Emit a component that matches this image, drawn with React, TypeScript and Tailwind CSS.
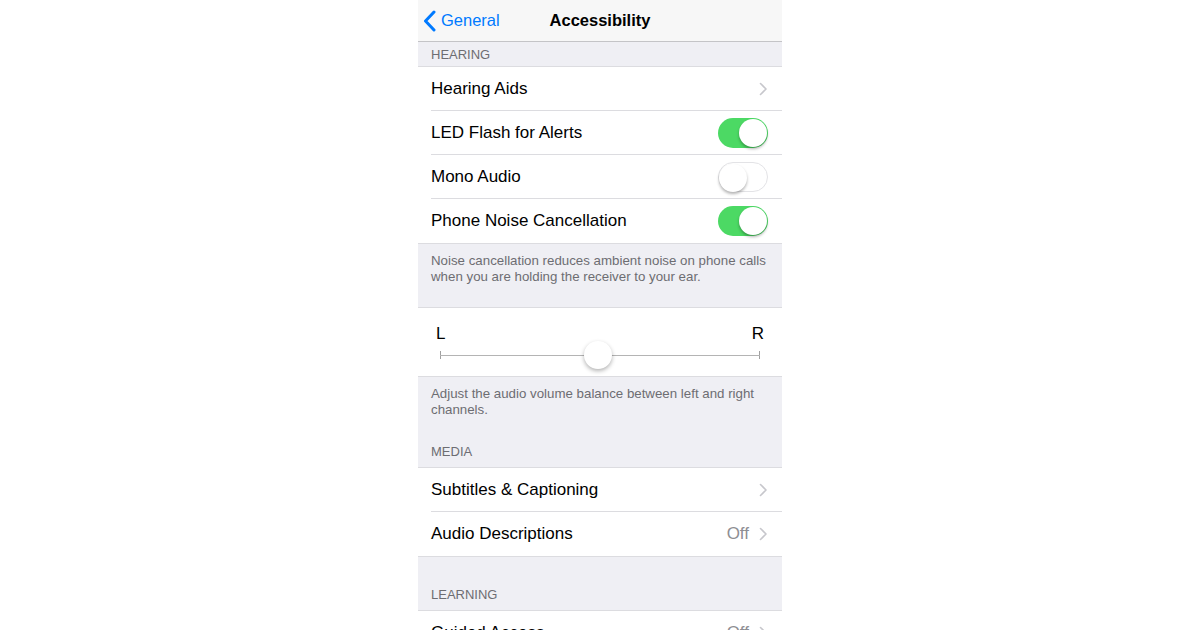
import React from 'react';

const font = { fontFamily: '"Liberation Sans", Arial, sans-serif' };

function Chevron() {
  return (
    <svg width="9" height="14" viewBox="0 0 9 14" className="shrink-0">
      <path d="M1.5 1.5 L7 7 L1.5 12.5" fill="none" stroke="#c7c7cc" strokeWidth="1.6" strokeLinecap="round" strokeLinejoin="round" />
    </svg>
  );
}

function Toggle({ on }: { on: boolean }) {
  return (
    <div
      className={`relative h-[30px] w-[50px] shrink-0 rounded-full ${
        on ? 'bg-[#4cd964]' : 'bg-white border border-[#e3e3e6]'
      }`}
    >
      <div
        className={`absolute top-[1px] h-[28px] w-[28px] rounded-full bg-white shadow-[0_2px_3px_rgba(0,0,0,0.3)] ${
          on ? 'right-[1px]' : 'left-0 top-0'
        }`}
      />
    </div>
  );
}

function Row({ label, last, children }: { label: string; last?: boolean; children?: React.ReactNode }) {
  return (
    <div className="flex h-[44px] items-center pl-[13px]">
      <div
        className={`flex h-full flex-1 items-center justify-between pr-[14px] ${
          last ? '' : 'border-b border-[#dcdce0]'
        }`}
      >
        <span className="text-[17px] text-black">{label}</span>
        <div className="flex items-center gap-[10px]">{children}</div>
      </div>
    </div>
  );
}

function Header({ children, className = '' }: { children: React.ReactNode; className?: string }) {
  return (
    <div className={`flex shrink-0 items-end px-[13px] text-[13px] text-[#6d6d72] ${className}`}>
      {children}
    </div>
  );
}

export default function App() {
  return (
    <div className="flex h-[630px] w-[1200px] justify-center overflow-hidden bg-white" style={font}>
      <div className="flex w-[364px] shrink-0 flex-col bg-[#efeff4]">
        {/* nav bar */}
        <div className="relative flex h-[42px] shrink-0 items-center border-b border-[#c4c4c7] bg-[#f7f7f7]">
          <div className="flex items-center pl-[5px] text-[#007aff]">
            <svg width="14" height="22" viewBox="0 0 14 22">
              <path d="M11 2 L2.5 11 L11 20" fill="none" stroke="#007aff" strokeWidth="3" strokeLinecap="round" strokeLinejoin="round" />
            </svg>
            <span className="ml-[4px] text-[16.5px]">General</span>
          </div>
          <span className="absolute left-0 right-0 text-center text-[16.5px] font-bold text-black">Accessibility</span>
        </div>

        <Header className="h-[24px] pb-[2px]">HEARING</Header>
        <div className="shrink-0 border-y border-[#dcdce0] bg-white">
          <Row label="Hearing Aids">
            <Chevron />
          </Row>
          <Row label="LED Flash for Alerts">
            <Toggle on />
          </Row>
          <Row label="Mono Audio">
            <Toggle on={false} />
          </Row>
          <Row label="Phone Noise Cancellation" last>
            <Toggle on />
          </Row>
        </div>
        <div className="h-[63px] shrink-0 px-[13px] pt-[9px] text-[13.3px] leading-[16px] text-[#6d6d72]">
          Noise cancellation reduces ambient noise on phone calls when you are holding the receiver to your ear.
        </div>

        {/* balance slider */}
        <div className="h-[70px] shrink-0 border-y border-[#dcdce0] bg-white px-[18px] pt-[16px]">
          <div className="flex justify-between text-[17px] leading-[20px] text-black">
            <span>L</span>
            <span>R</span>
          </div>
          <div className="relative mx-[4px] mt-[6px] h-[10px]">
            <div className="absolute left-0 top-[1px] h-[8px] w-px bg-[#a0a0a0]" />
            <div className="absolute right-0 top-[1px] h-[8px] w-px bg-[#a0a0a0]" />
            <div className="absolute left-0 right-0 top-[5px] h-px bg-[#b4b4b4]" />
            <div className="absolute left-[144px] top-[-9px] h-[28px] w-[28px] rounded-full bg-white shadow-[0_2px_4px_rgba(0,0,0,0.3)]" />
          </div>
        </div>
        <div className="shrink-0 px-[13px] pt-[9px] text-[13.3px] leading-[16px] text-[#6d6d72]">
          Adjust the audio volume balance between left and right channels.
        </div>
        <Header className="h-[49px] pb-[6px]">MEDIA</Header>
        <div className="shrink-0 border-y border-[#dcdce0] bg-white">
          <Row label="Subtitles & Captioning">
            <Chevron />
          </Row>
          <Row label="Audio Descriptions" last>
            <span className="text-[17px] text-[#8e8e93]">Off</span>
            <Chevron />
          </Row>
        </div>
        <Header className="h-[53px] pb-[6px]">LEARNING</Header>
        <div className="shrink-0 border-t border-[#dcdce0] bg-white">
          <Row label="Guided Access">
            <span className="text-[17px] text-[#8e8e93]">Off</span>
            <Chevron />
          </Row>
        </div>
      </div>
    </div>
  );
}
